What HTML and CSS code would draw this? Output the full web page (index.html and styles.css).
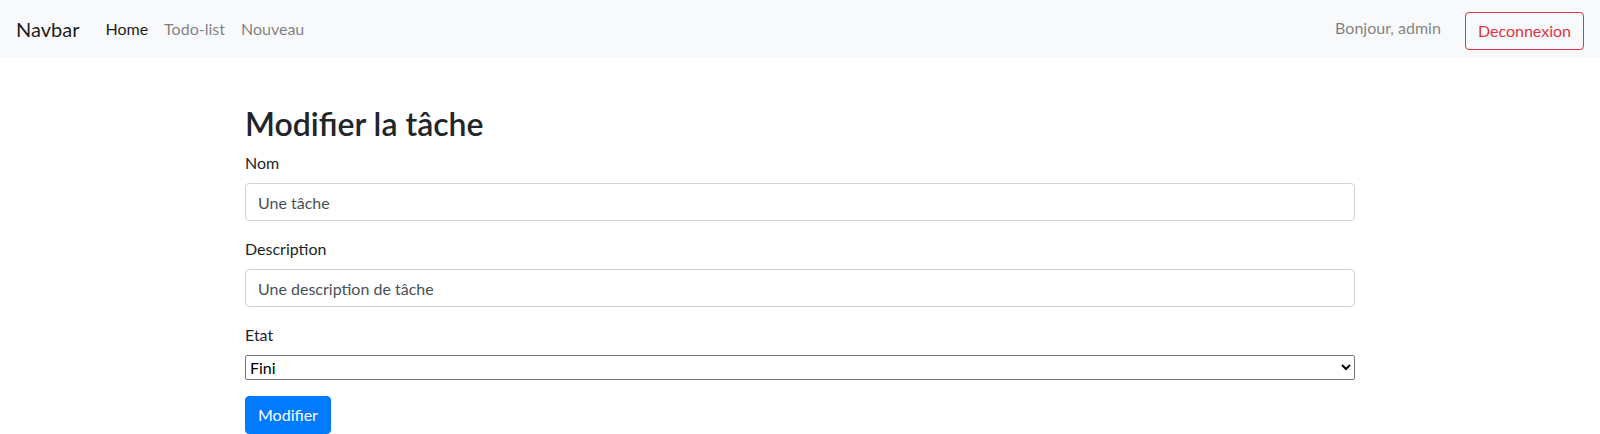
FILE: index.html
```html
<!DOCTYPE html>
<html lang="fr">
<head>
<meta charset="utf-8">
<title>Modifier la tâche</title>
<link rel="stylesheet" href="styles.css">
</head>
<body>
<nav class="navbar">
  <a class="navbar-brand" href="#">Navbar</a>
  <ul class="nav-left">
    <li><a class="nav-link active" href="#">Home</a></li>
    <li><a class="nav-link" href="#">Todo-list</a></li>
    <li><a class="nav-link" href="#">Nouveau</a></li>
  </ul>
  <div class="nav-right">
    <span class="nav-text">Bonjour, admin</span>
    <a class="btn btn-outline-danger" href="#">Deconnexion</a>
  </div>
</nav>

<main class="container">
  <h1 class="title">Modifier la tâche</h1>
  <form class="task-form">
    <div class="form-group">
      <label for="nom">Nom</label>
      <input class="form-control" id="nom" type="text" value="Une tâche">
    </div>
    <div class="form-group">
      <label for="desc">Description</label>
      <input class="form-control" id="desc" type="text" value="Une description de tâche">
    </div>
    <div class="form-group">
      <label for="etat">Etat</label>
      <select class="state-select" id="etat">
        <option>En cours</option>
        <option selected>Fini</option>
      </select>
    </div>
    <button class="btn btn-primary" type="button">Modifier</button>
  </form>
</main>
</body>
</html>
```
FILE: styles.css
```css
* { box-sizing: border-box; }

body {
  margin: 0;
  font-family: Lato, "Liberation Sans", sans-serif;
  font-size: 16px;
  line-height: 1.5;
  color: #212529;
  background: #fff;
}

a { text-decoration: none; }

.navbar {
  height: 57px;
  padding: 0 16px;
  background: #f8f9fa;
  display: flex;
  align-items: center;
}

.navbar-brand {
  font-size: 20px;
  line-height: 30px;
  padding: 5px 0;
  margin-right: 18px;
  color: rgba(0, 0, 0, .9);
}

.nav-left {
  display: flex;
  list-style: none;
  margin: 0;
  padding: 0;
}

.nav-link {
  display: block;
  padding: 8px 8px;
  color: rgba(0, 0, 0, .5);
}

.nav-link.active { color: rgba(0, 0, 0, .9); }

.nav-right {
  margin-left: auto;
  display: flex;
  align-items: center;
}

.nav-text {
  color: rgba(0, 0, 0, .5);
  margin-right: 24px;
  margin-top: -1px;
}

.btn {
  display: inline-block;
  font-family: inherit;
  font-size: 16px;
  line-height: 24px;
  padding: 6px 12px;
  border: 1px solid transparent;
  border-radius: 4px;
  cursor: pointer;
}

.btn-outline-danger {
  color: #dc3545;
  border-color: #dc3545;
  margin-top: 4px;
}

.btn-primary {
  color: #fff;
  background: #007bff;
  border-color: #007bff;
}

.container {
  max-width: 1140px;
  margin: 48px auto 0;
  padding: 0 15px;
}

.title {
  margin: 0 0 8px;
  font-size: 32px;
  font-weight: 600;
  line-height: 1.2;
  color: #212529;
}

.form-group { margin-bottom: 16px; }

.form-group label {
  display: inline-block;
  margin-bottom: 8px;
}

.form-control {
  display: block;
  width: 100%;
  height: 38px;
  padding: 6px 12px;
  font-family: inherit;
  font-size: 16px;
  line-height: 24px;
  color: #495057;
  background: #fff;
  border: 1px solid #ced4da;
  border-radius: 4px;
}

.state-select {
  display: block;
  width: 100%;
  height: 25px;
  font-family: inherit;
  font-size: 16px;
  color: #000;
  background: #fff;
  border: 1px solid #767676;
  border-radius: 2px;
}
```
